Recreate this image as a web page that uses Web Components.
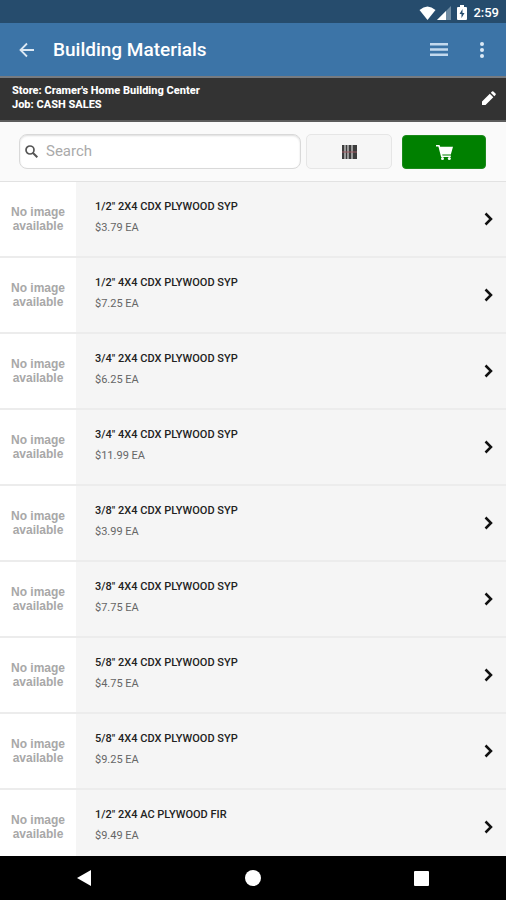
<!DOCTYPE html>
<html lang="en">
<head>
<meta charset="utf-8">
<meta name="viewport" content="width=device-width, initial-scale=1">
<title>Building Materials</title>
<style>
html, body { margin: 0; height: 100%; }
body { font-family: Roboto, "Liberation Sans", sans-serif; background: #f5f5f5; }
</style>
</head>
<body>
<catalog-page></catalog-page>
<script>
const define = (name, html, setup) => {
  const template = document.createElement('template');
  template.innerHTML = '<style>*{box-sizing:border-box}button{font:inherit;color:inherit;border:0;padding:0;margin:0;background:none;display:grid;place-items:center;cursor:pointer}svg{display:block}</style>' + html;
  customElements.define(name, class extends HTMLElement {
    constructor() {
      super();
      this.attachShadow({ mode: 'open' }).append(template.content.cloneNode(true));
      if (setup) setup(this, this.shadowRoot);
    }
  });
};

define('status-bar', `
<style>
:host { display: flex; align-items: center; justify-content: flex-end; height: 23px; flex: none; padding: 2px 7px 0 0; background: #264c6d; color: #fff; font-size: 13px; line-height: 16px; font-weight: 500; }
.signal { margin-left: 1px; } .battery { margin: 0 6px 0 6px; }
</style>
<svg width="17" height="14" viewBox="0 0 17 14" aria-hidden="true"><path fill="#fff" d="M.5 4Q8.500-3 16.500 4L8.500 14z"/></svg>
<svg class="signal" width="14" height="14" viewBox="0 0 14 14" aria-hidden="true"><path fill="#6f8ba2" d="M14 0v14H0z"/><path fill="#fff" d="M9 5v9H0z"/></svg>
<svg class="battery" width="10" height="15" viewBox="0 0 10 15" aria-hidden="true"><path fill="#fff" d="M3 0h4v2h2q1 0 1 1v11q0 1-1 1H1q-1 0-1-1V3q0-1 1-1h2z"/><path fill="#264c6d" d="M5.500 4 2.500 9h2v4l3-5h-2z"/></svg>
<span>2:59</span>`);

define('app-bar', `
<style>
:host { display: flex; align-items: center; height: 55px; flex: none; padding: 0 12px 0 15px; background: #3c74a7; border-bottom: 2px solid #777b80; color: #fff; }
h1 { margin: 0 auto 0 14px; font-size: 19px; line-height: 24px; font-weight: 500; }
button { width: 24px; height: 32px; }
.menu { margin-right: 19px; }
</style>
<button aria-label="Back"><svg width="16" height="16" viewBox="0 0 16 16" fill="none" stroke="#dce8f3" stroke-width="1.800"><path d="M15 8H2M8 1.500 1.500 8 8 14.500"/></svg></button>
<h1><slot></slot></h1>
<button class="menu" aria-label="Menu"><svg width="18" height="13" viewBox="0 0 18 13" fill="#c3d9ee"><path d="M0 0h18v2.500H0zM0 5.200h18v2.500H0zM0 10.400h18v2.500H0z"/></svg></button>
<button aria-label="More options"><svg width="4" height="16" viewBox="0 0 4 16" fill="#dce9f5"><circle cx="2" cy="2" r="2"/><circle cx="2" cy="8" r="2"/><circle cx="2" cy="14" r="2"/></svg></button>`);

define('store-banner', `
<style>
:host { display: flex; align-items: center; justify-content: space-between; height: 44px; flex: none; padding: 0 10px 2px 12px; background: #333; border-bottom: 2px solid #5c5c5c; color: #fff; font-size: 11px; line-height: 14px; font-weight: 800; }
</style>
<div><slot></slot></div>
<button aria-label="Edit store and job"><svg width="14" height="14" viewBox="0 0 14 14"><path fill="#fff" d="M0 14V10.500L7.800 2.700l3.500 3.500L3.500 14zM8.800 1.700 10 .5q.7-.7 1.400 0l2.100 2.100q.7.7 0 1.400L12.300 5.200z"/></svg></button>`);

define('search-bar', `
<style>
:host { display: flex; height: 60px; flex: none; padding: 12px 20px 12px 19px; background: #fafafa; border-bottom: 1px solid #e2e2e2; }
label { flex: 1; min-width: 0; display: flex; align-items: center; gap: 8px; padding: 0 0 1px 5px; background: #fff; border: 1px solid #d9d9d9; border-radius: 8px; margin-right: 5px; box-shadow: inset 0 1px 2px #ddd; }
input { flex: 1; min-width: 0; border: 0; outline: 0; padding: 0; background: none; font: 15px/20px Roboto, sans-serif; color: #333; }
input::placeholder { color: #aaa; opacity: 1; }
button { flex: 0 0 86px; background: #f6f6f6; border: 1px solid #e6e6e6; border-radius: 5px; }
.cart { flex-basis: 84px; margin: 1px 0 0 10px; background: #008000; border: 1px solid #1b8a1b; border-radius: 4px; }
</style>
<label><svg width="13" height="13" viewBox="0 0 13 13" fill="none" stroke="#555" stroke-width="1.700" aria-hidden="true"><circle cx="5" cy="5" r="4"/><path stroke-width="2" d="m8 8 4.300 4.300"/></svg><input type="text" placeholder="Search" aria-label="Search"></label>
<button aria-label="Scan barcode"><svg width="15" height="14" viewBox="0 0 15 14"><path fill="#3d3d3d" d="M0 0h2.500v14H0zM3.500 0h2v14h-2zM6.500 0h3v14h-3zM10.500 0H15v14h-4.500z"/><path stroke="#9d5a62" d="M0 7h15"/></svg></button>
<button class="cart" aria-label="Cart"><svg width="17" height="15" viewBox="0 0 17 15"><path fill="#fff" d="M0 0h3.500L4.200 1.700H17L14.800 9.500H6.200l.3 1h8.300V12H5.100L2.400 1.500H0z"/><circle cx="6.500" cy="13.400" r="1.500" fill="#fff"/><circle cx="13.300" cy="13.400" r="1.500" fill="#fff"/></svg></button>`);

define('product-row', `
<style>
:host { display: block; }
a { display: flex; height: 76px; align-items: center; background: #f5f5f5; border-bottom: 2px solid #ececec; color: #222; text-decoration: none; padding-right: 13px; }
.thumb { flex: none; width: 76px; align-self: stretch; display: grid; place-content: center; background: #fff; color: #a8a8a8; text-align: center; font: 700 12px/14px "Liberation Sans", sans-serif; }
.text { flex: 1; padding: 0 12px 4px 19px; font-size: 11px; }
.name { font-weight: 500; line-height: 22px; }
.price { color: #666; line-height: 20px; }
</style>
<a href="#"><span class="thumb"><span>No image</span><span>available</span></span>
<div class="text"><div class="name"><slot></slot></div><div class="price"><slot name="price"></slot></div></div>
<svg width="9" height="14" viewBox="0 0 9 14" fill="none" stroke="#111" stroke-width="2.500" aria-hidden="true"><path d="m1.500 1.500 5.500 5.500-5.500 5.500"/></svg></a>`);

define('product-list', `
<style>:host { display: block; flex: 1; min-height: 0; overflow: hidden; }</style>
<slot></slot>`);

define('nav-bar', `
<style>:host { display: flex; height: 44px; flex: none; background: #000; justify-content: space-around; align-items: center; }
button { flex: 1; height: 44px; }</style>
<button aria-label="Back"><svg width="14" height="16" viewBox="0 0 14 16"><path fill="#fff" d="M14 0v16L0 8z"/></svg></button>
<button aria-label="Home"><svg width="16" height="16" viewBox="0 0 16 16"><circle cx="8" cy="8" r="8" fill="#fff"/></svg></button>
<button aria-label="Recent apps"><svg width="15" height="15" viewBox="0 0 15 15"><rect width="15" height="15" rx="1" fill="#fff"/></svg></button>`);

const products = [
  ['1/2" 2X4 CDX PLYWOOD SYP', '$3.79 EA'],
  ['1/2" 4X4 CDX PLYWOOD SYP', '$7.25 EA'],
  ['3/4" 2X4 CDX PLYWOOD SYP', '$6.25 EA'],
  ['3/4" 4X4 CDX PLYWOOD SYP', '$11.99 EA'],
  ['3/8" 2X4 CDX PLYWOOD SYP', '$3.99 EA'],
  ['3/8" 4X4 CDX PLYWOOD SYP', '$7.75 EA'],
  ['5/8" 2X4 CDX PLYWOOD SYP', '$4.75 EA'],
  ['5/8" 4X4 CDX PLYWOOD SYP', '$9.25 EA'],
  ['1/2" 2X4 AC PLYWOOD FIR', '$9.49 EA'],
];

define('catalog-page', `
<style>:host { display: flex; flex-direction: column; height: 100vh; }</style>
<status-bar></status-bar>
<app-bar>Building Materials</app-bar>
<store-banner><div>Store: Cramer's Home Building Center</div><div>Job: CASH SALES</div></store-banner>
<search-bar></search-bar>
<product-list>${products.map(([name, price]) => `<product-row>${name}<span slot="price">${price}</span></product-row>`).join('')}</product-list>
<nav-bar></nav-bar>`);
</script>
</body>
</html>
